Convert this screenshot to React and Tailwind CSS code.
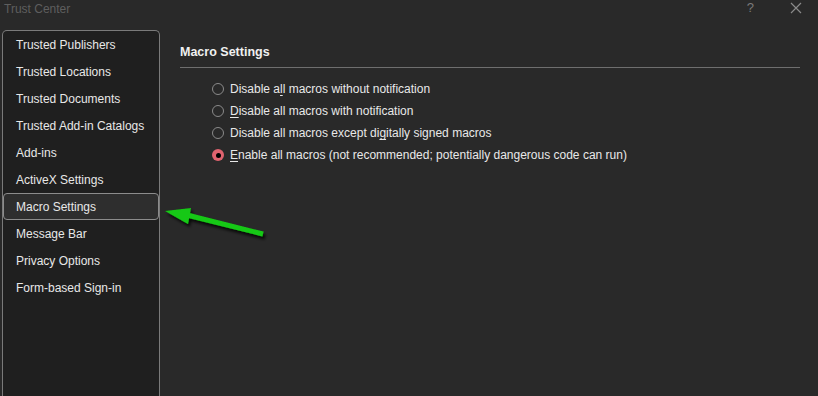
const sections = [
  "Trusted Publishers",
  "Trusted Locations",
  "Trusted Documents",
  "Trusted Add-in Catalogs",
  "Add-ins",
  "ActiveX Settings",
  "Macro Settings",
  "Message Bar",
  "Privacy Options",
  "Form-based Sign-in",
];

// label split so the access key letter gets underlined
const options = [
  { pre: "Disable a", key: "l", post: "l macros without notification", checked: false },
  { pre: "", key: "D", post: "isable all macros with notification", checked: false },
  { pre: "Disable all macros except di", key: "g", post: "itally signed macros", checked: false },
  { pre: "", key: "E", post: "nable all macros (not recommended; potentially dangerous code can run)", checked: true },
];

const Radio = ({ checked }) =>
  checked ? (
    <span className="w-[12px] h-[12px] rounded-full bg-[#e0636f] flex items-center justify-center shrink-0">
      <span className="w-[5px] h-[5px] rounded-full bg-black" />
    </span>
  ) : (
    <span className="w-[12px] h-[12px] rounded-full border border-[#8a8a8a] shrink-0" />
  );

export default function App() {
  const selected = "Macro Settings";

  return (
    <div
      className="relative w-[818px] h-[396px] overflow-hidden bg-[#292929] text-[#e8e8e8] flex flex-col"
      style={{ fontFamily: '"Segoe UI", "Liberation Sans", Arial, sans-serif' }}
    >
      {/* ===== Title bar ===== */}
      <div className="h-[30px] flex items-start justify-between shrink-0">
        <span className="pl-[4px] pt-[1px] text-[12px] leading-[16px] text-[#5e5e5e]">Trust Center</span>
        <div className="flex items-start text-[#7a7a7a]">
          <span className="text-[13px] leading-[15px] mr-[36px]">?</span>
          <svg width="12" height="12" viewBox="0 0 12 12" className="mt-[2px] mr-[16px]">
            <path d="M1 1 L11 11 M11 1 L1 11" stroke="#8a8a8a" strokeWidth="1.2" />
          </svg>
        </div>
      </div>

      <div className="flex flex-1 min-h-0">
        {/* ===== Sidebar ===== */}
        <div className="ml-[2px] w-[158px] border border-b-0 border-[#7a7a7a] rounded-t-[5px] bg-[#1f1f1f] shrink-0">
          {sections.map((s) => (
            <div
              key={s}
              className={`h-[27px] flex items-center pl-[12px] text-[12px] rounded-[4px] border ${
                s === selected ? "border-[#8c8c8c] bg-[#2e2e2e]" : "border-transparent"
              }`}
            >
              {s}
            </div>
          ))}
        </div>

        {/* ===== Content ===== */}
        <div className="flex-1 pl-[20px] pr-[18px] pt-[13px]">
          <h2 className="text-[12.5px] font-bold leading-[18px] text-[#f0f0f0]">Macro Settings</h2>
          <div className="mt-[6px] h-[1px] bg-[#6e6e6e]" />
          <div className="pl-[32px] pt-[10px] flex flex-col">
            {options.map((o, i) => (
              <label key={i} className="h-[22px] flex items-center gap-[6px] text-[12px]">
                <Radio checked={o.checked} />
                <span>
                  {o.pre}
                  <span className="underline underline-offset-2">{o.key}</span>
                  {o.post}
                </span>
              </label>
            ))}
          </div>
        </div>
      </div>

      {/* ===== Annotation arrow ===== */}
      <svg className="absolute left-[160px] top-[200px]" width="115" height="50" viewBox="0 0 115 50">
        <defs>
          <filter id="sh" x="-20%" y="-20%" width="150%" height="180%">
            <feDropShadow dx="2" dy="3" stdDeviation="1.5" floodColor="#000" floodOpacity="0.8" />
          </filter>
        </defs>
        <g filter="url(#sh)">
          <path d="M27 15 L103 34" stroke="#14c814" strokeWidth="5" />
          <polygon points="5,11 31,8 28,24" fill="#14c814" />
        </g>
      </svg>
    </div>
  );
}
